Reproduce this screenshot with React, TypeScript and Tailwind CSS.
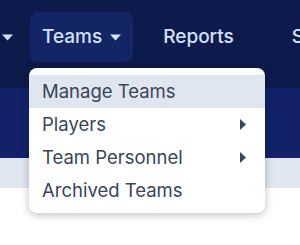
import React from 'react';

const navText = 'text-[19px] font-medium text-[#d3e2fa] whitespace-nowrap';

function Caret() {
    return (
        <svg width="11" height="7" viewBox="0 0 11 7" className="ml-[8px] shrink-0">
            <path d="M0 0.5h11L5.5 6.5z" fill="#d3e2fa" />
        </svg>
    );
}

function SubArrow() {
    return (
        <svg width="6" height="11" viewBox="0 0 6 11">
            <path d="M0 0l6 5.5L0 11z" fill="#3a4556" />
        </svg>
    );
}

const items = [
    { label: 'Manage Teams', active: true, sub: false },
    { label: 'Players', active: false, sub: true },
    { label: 'Team Personnel', active: false, sub: true },
    { label: 'Archived Teams', active: false, sub: false },
];

export default function App() {
    return (
        <div
            className="relative w-[300px] h-[245px] overflow-hidden bg-white"
            style={{ fontFamily: 'Inter, "Noto Sans", sans-serif' }}
        >
            {/* Top nav */}
            <div className="h-[88px] bg-[#0f1a4c] flex items-start pt-[12px] whitespace-nowrap">
                <div className="flex items-center justify-end h-[50px] w-[13px] shrink-0 overflow-hidden">
                    <span className={navText}>Play</span>
                    <Caret />
                </div>
                <div className="flex items-center h-[50px] ml-[17px] px-[12px] shrink-0 rounded-lg bg-[#142565]">
                    <span className={navText}>Teams</span>
                    <Caret />
                </div>
                <div className="flex items-center h-[50px] ml-[18px] px-[12px] shrink-0">
                    <span className={navText}>Reports</span>
                </div>
                <div className="flex items-center h-[50px] ml-[34px] px-[12px] shrink-0">
                    <span className={navText}>Schedule</span>
                </div>
            </div>
            <div className="h-[70px] bg-[#132268]" />
            <div className="h-[30px] bg-[#e0e7f0]" />

            {/* Dropdown */}
            <div className="absolute left-[29px] top-[68px] w-[236px] rounded-lg bg-white pt-[7px] pb-[6px] shadow-[0_2px_8px_rgba(0,0,0,0.25)]">
                {items.map((item) => (
                    <div
                        key={item.label}
                        className={`flex items-center justify-between h-[33px] pl-[13px] pr-[19px] ${item.active ? 'bg-[#dfe6ef]' : ''}`}
                    >
                        <span className="text-[18.5px] text-[#3a4556]">{item.label}</span>
                        {item.sub && <SubArrow />}
                    </div>
                ))}
            </div>
        </div>
    );
}
